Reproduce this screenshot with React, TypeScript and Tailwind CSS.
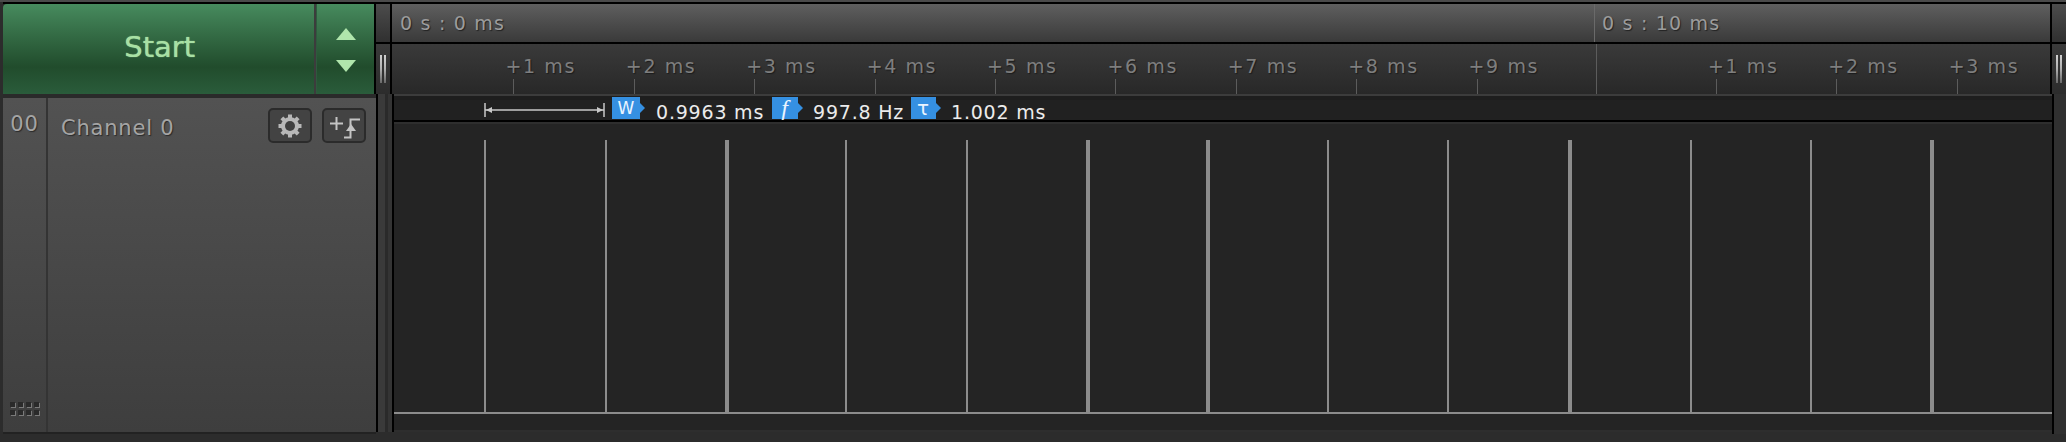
const sans = "font-['DejaVu_Sans',sans-serif]";

const Grip = () => (
  <div className="flex gap-[2px]">
    <div className="w-[2px] h-[28px] bg-gradient-to-b from-[#d0d0d0] via-[#b0b0b0] to-[#6a6a6a]" />
    <div className="w-[2px] h-[28px] bg-gradient-to-b from-[#d0d0d0] via-[#b0b0b0] to-[#6a6a6a]" />
  </div>
);

const SplitterTop = () => (
  <div className="w-[14px] h-full flex flex-col">
    <div className="h-[38px] bg-gradient-to-b from-[#4c4c4c] to-[#303030]" />
    <div className="h-[2px] bg-black" />
    <div className="flex-1 flex items-center justify-center bg-gradient-to-b from-[#3a3a3a] to-[#2c2c2c]">
      <Grip />
    </div>
  </div>
);

const Tick = ({ label }: { label: string }) => (
  <div className="w-[120.4px] shrink-0 flex flex-col justify-end">
    <span className="text-[19px] tracking-[1.6px] leading-[20px] mb-[3px] text-[#7e7e7e] whitespace-nowrap [text-shadow:1px_1px_1px_#1c1c1c]">{label}</span>
    <div className="w-px h-[15px] ml-[8px] bg-[#5c5c5c]" />
  </div>
);

const Badge = ({ children, w, cls }: { children: string; w: string; cls: string }) => (
  <div className="flex items-center shrink-0">
    <div className={`${w} ${cls} h-[22px] bg-[#3590e2] flex items-center justify-center text-[#eaf4ff] leading-none`}>{children}</div>
    <svg width="5" height="10" viewBox="0 0 5 10"><polygon points="0,0 5,5 0,10" fill="#3590e2" /></svg>
  </div>
);

const Gear = () => (
  <svg width="26" height="26" viewBox="0 0 26 26">
    <circle cx="13" cy="13" r="7" fill="none" stroke="#b8b8b8" strokeWidth="4" />
    {[0, 45, 90, 135].map((a) => (
      <rect key={a} x="11" y="1.5" width="4" height="23" fill="#b8b8b8" transform={`rotate(${a} 13 13)`} />
    ))}
    <circle cx="13" cy="13" r="5" fill="#3f3f3f" />
  </svg>
);

const Trace = () => (
  <svg width="36" height="26" viewBox="0 0 36 26" fill="none">
    <path d="M4 10.5h13M10.5 4v13" stroke="#c4c4c4" strokeWidth="2" />
    <path d="M34 6.5H24.5V24.5H18" stroke="#c4c4c4" strokeWidth="2" />
    <polygon points="25,11 30,18 20,18" fill="#c4c4c4" />
  </svg>
);

const pulses = [
  [484, 2], [605, 2], [725, 4], [845, 2], [966, 2], [1086, 4], [1206, 4],
  [1327, 2], [1447, 2], [1568, 4], [1690, 2], [1810, 2], [1930, 4],
];

export default function App() {
  return (
    <div className={`${sans} w-[2066px] h-[442px] overflow-hidden bg-[#2c2c2c] flex flex-col`}>
      <div className="h-[2px] bg-[#4a4a4a]" />
      <div className="h-[2px] ml-[3px] bg-black" />
      {/* top row */}
      <div className="h-[90px] flex pl-[3px]">
        <div className="w-[313px] flex items-center justify-center bg-gradient-to-b from-[#478b5e] via-[#214c2c] via-70% to-[#2a5c3b] rounded-tl-[4px]">
          <span className="text-[29px] leading-none text-[#a8e0a4] mt-[-3px] ml-[2px] [text-shadow:0_0_1px_#a8e0a4]">Start</span>
        </div>
        <div className="w-[2px] bg-[#3c3c3c]" />
        <div className="w-[1px] bg-[#2e5a3e]" />
        <div className="w-[57px] flex flex-col items-center justify-center gap-[20px] pt-[2px] bg-gradient-to-b from-[#478b5e] via-[#214c2c] via-70% to-[#2a5c3b]">
          <svg width="20" height="12" viewBox="0 0 20 12"><polygon points="10,0 20,12 0,12" fill="#b0e6ac" /></svg>
          <svg width="20" height="12" viewBox="0 0 20 12"><polygon points="0,0 20,0 10,12" fill="#b0e6ac" /></svg>
        </div>
        <div className="w-[2px] bg-black" />
        <SplitterTop />
        <div className="w-[2px] bg-black" />
        <div className="w-[1658px] flex flex-col">
          <div className="h-[38px] bg-gradient-to-b from-[#5f5f5f] to-[#3a3a3a] flex text-[19px] tracking-[1.2px] leading-[38px] text-[#9c9c9c] [text-shadow:1px_1px_1px_#222]">
            <div className="w-[1202px] pl-[8px] shrink-0">0 s : 0 ms</div>
            <div className="flex-1 border-l border-[#6a6a6a] pl-[7px]">0 s : 10 ms</div>
          </div>
          <div className="h-[2px] bg-black" />
          <div className="flex-1 flex bg-gradient-to-b from-[#3a3a3a] to-[#282828] overflow-hidden">
            <div className="w-[113.4px] shrink-0" />
            {[1, 2, 3, 4, 5, 6, 7, 8, 9].map((n) => <Tick key={n} label={`+${n} ms`} />)}
            <div className="w-[6.6px] shrink-0" />
            <div className="w-px shrink-0 bg-[#5c5c5c]" />
            <div className="w-[111.4px] shrink-0" />
            {[1, 2, 3].map((n) => <Tick key={n} label={`+${n} ms`} />)}
          </div>
        </div>
        <div className="w-[2px] bg-black" />
        <SplitterTop />
      </div>
      {/* bottom row */}
      <div className="h-[340px] flex pl-[3px]">
        <div className="w-[373px] flex flex-col">
          <div className="h-[4px] bg-[#2a2a2a]" />
          <div className="flex-1 flex bg-gradient-to-b from-[#525252] to-[#3e3e3e] text-[#a4a4a4]">
            <div className="w-[43px] flex flex-col items-center justify-between pt-[14px] pb-[17px]">
              <span className="text-[21px] tracking-[1px] leading-[24px] [text-shadow:1px_1px_1px_#2a2a2a]">00</span>
              <div className="grid grid-cols-4 gap-[3px]">
                {Array.from({ length: 8 }).map((_, i) => (
                  <div key={i} className="w-[5px] h-[5px] bg-[#2a2a2a] shadow-[1px_1px_0_#7a7a7a]" />
                ))}
              </div>
            </div>
            <div className="w-[2px] bg-[#343434]" />
            <div className="flex-1 flex items-start pl-[13px] pt-[10px]">
              <span className="text-[21px] tracking-[0.8px] leading-[32px] mt-[4px] whitespace-nowrap [text-shadow:1px_1px_1px_#2a2a2a]">Channel 0</span>
              <div className="ml-auto flex gap-[10px] pr-[10px]">
                <div className="w-[44px] h-[35px] rounded-[5px] border-2 border-[#2b2b2b] bg-[#434343] flex items-center justify-center"><Gear /></div>
                <div className="w-[44px] h-[35px] rounded-[5px] border-2 border-[#2b2b2b] bg-[#434343] flex items-center justify-center"><Trace /></div>
              </div>
            </div>
          </div>
          <div className="h-[2px] bg-[#222222]" />
        </div>
        <div className="w-[2px] bg-black mb-[2px]" />
        <div className="w-[14px] mb-[2px] flex">
          <div className="w-[7px] bg-[#3a3a3a]" />
          <div className="w-[3px] bg-[#2a2a2a]" />
          <div className="w-[4px] bg-[#343434]" />
        </div>
        <div className="w-[2px] bg-black mb-[2px]" />
        <div className="w-[1658px] mb-[2px] flex flex-col">
          <div className="h-[2px] bg-[#3c3c3c]" />
          <div className="h-[4px] bg-[#1e1e1e]" />
          <div className="h-[20px] bg-[#212121] flex items-center text-[19px] tracking-[0.8px] leading-none text-[#ececec]">
            <svg className="ml-[90px] shrink-0" width="121" height="14" viewBox="0 0 121 14">
              <path d="M1 0v14M120 0v14M1 7H120" stroke="#c8c8c8" strokeWidth="1.5" fill="none" />
              <path d="M2 7l6-3v6zM119 7l-6-3v6z" fill="#c8c8c8" />
            </svg>
            <div className="ml-[7px] mt-[-4px]"><Badge w="w-[28px]" cls="text-[17px] tracking-normal">W</Badge></div>
            <span className="ml-[11px] mt-[4px] w-[116px] shrink-0">0.9963 ms</span>
            <div className="mt-[-4px]"><Badge w="w-[26px]" cls="text-[24px] italic font-['Liberation_Serif',serif]">f</Badge></div>
            <span className="ml-[10px] mt-[4px] w-[98px] shrink-0">997.8 Hz</span>
            <div className="mt-[-4px]"><Badge w="w-[25px]" cls="text-[20px]">τ</Badge></div>
            <span className="ml-[10px] mt-[4px]">1.002 ms</span>
          </div>
          <div className="h-[2px] bg-black" />
          <div className="flex-1 bg-[#242424] border-t-2 border-[#2e2e2e] border-b-2">
            <svg width="1658" height="306" viewBox="0 0 1658 306" className="block">
              {pulses.map(([x, w]) => (
                <rect key={x} x={x - 394} y={16} width={w} height={272} fill="#8c8c8c" />
              ))}
              <rect x="0" y="288" width="1658" height="2" fill="#8c8c8c" />
            </svg>
          </div>
        </div>
        <div className="w-[2px] bg-black" />
        <div className="w-[12px] bg-[#303030]" />
      </div>
    </div>
  );
}
